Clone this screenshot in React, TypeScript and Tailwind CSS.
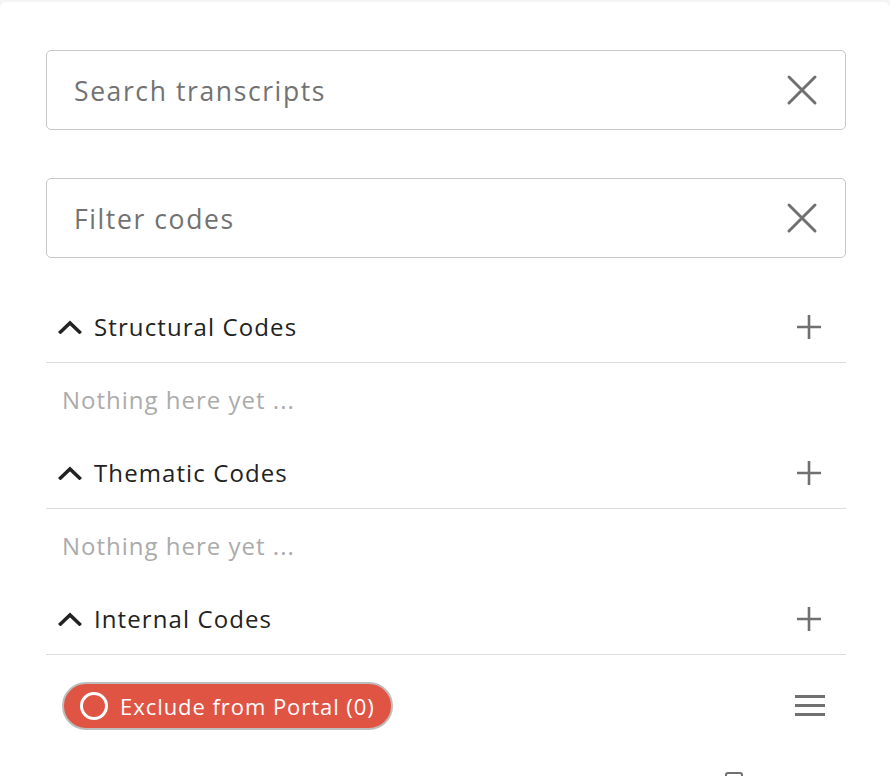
import React from 'react';

const font = { fontFamily: '"Open Sans", "Lato", sans-serif' };

function ClearIcon() {
  return (
    <svg width="32" height="32" viewBox="0 0 32 32" fill="none" stroke="#707070" strokeWidth="3" strokeLinecap="round">
      <path d="M3 3 L29 29 M29 3 L3 29" />
    </svg>
  );
}

function SearchBox({ placeholder }: { placeholder: string }) {
  return (
    <div className="flex h-[80px] items-center justify-between rounded-[5px] border border-[#c8c8c8] pl-[27px] pr-[27px]">
      <span className="pt-[3px] text-[26.5px] tracking-[1.6px] text-[#727272]">{placeholder}</span>
      <ClearIcon />
    </div>
  );
}

function Section({ title }: { title: string }) {
  return (
    <div className="flex h-[72px] items-center justify-between border-b border-[#dcdcdc] pl-[12px] pr-[24px]">
      <div className="flex items-center gap-[12px]">
        <svg width="24" height="14" viewBox="0 0 24 14" fill="none" stroke="#222" strokeWidth="3.5" strokeLinecap="square">
          <path d="M2.5 12 L12 3 L21.5 12" />
        </svg>
        <span className="text-[24px] tracking-[1.1px] text-[#222]">{title}</span>
      </div>
      <svg width="26" height="26" viewBox="0 0 26 26" fill="none" stroke="#707070" strokeWidth="2.6">
        <path d="M13 1 V25 M1 13 H25" />
      </svg>
    </div>
  );
}

function Empty() {
  return (
    <div className="flex h-[74px] items-center pl-[16px] text-[24px] tracking-[1px] text-[#ababab]">Nothing here yet ...</div>
  );
}

export default function App() {
  return (
    <div className="h-[776px] w-[890px] overflow-hidden bg-[#f4f4f4] pt-[2px]" style={font}>
      <div className="h-full rounded-tl-[6px] rounded-tr-[6px] bg-white px-[46px] pr-[44px] pt-[48px]">
        <div className="flex flex-col gap-[48px]">
          <SearchBox placeholder="Search transcripts" />
          <SearchBox placeholder="Filter codes" />
        </div>
        <div className="mt-[33px]">
          <Section title="Structural Codes" />
          <Empty />
          <Section title="Thematic Codes" />
          <Empty />
          <Section title="Internal Codes" />
        </div>
        <div className="flex items-center justify-between pl-[16px] pr-[20px] pt-[27px]">
          <div className="flex h-[48px] items-center gap-[12px] rounded-full border-2 border-[#bdbdbd] bg-[#e05444] pl-[16px] pr-[16px]">
            <span className="h-[28px] w-[28px] rounded-full border-[3px] border-white" />
            <span className="text-[22px] tracking-[0.95px] text-white">Exclude from Portal (0)</span>
          </div>
          <svg width="32" height="24" viewBox="0 0 32 24" fill="#707070">
            <rect x="1" y="1" width="30" height="3" />
            <rect x="1" y="10" width="30" height="3" />
            <rect x="1" y="19" width="30" height="3" />
          </svg>
        </div>
        <div className="mt-[42px] flex pl-[679px]">
          <div className="h-[10px] w-[18px] rounded-t-[3px] border-2 border-[#707070]" />
        </div>
      </div>
    </div>
  );
}
